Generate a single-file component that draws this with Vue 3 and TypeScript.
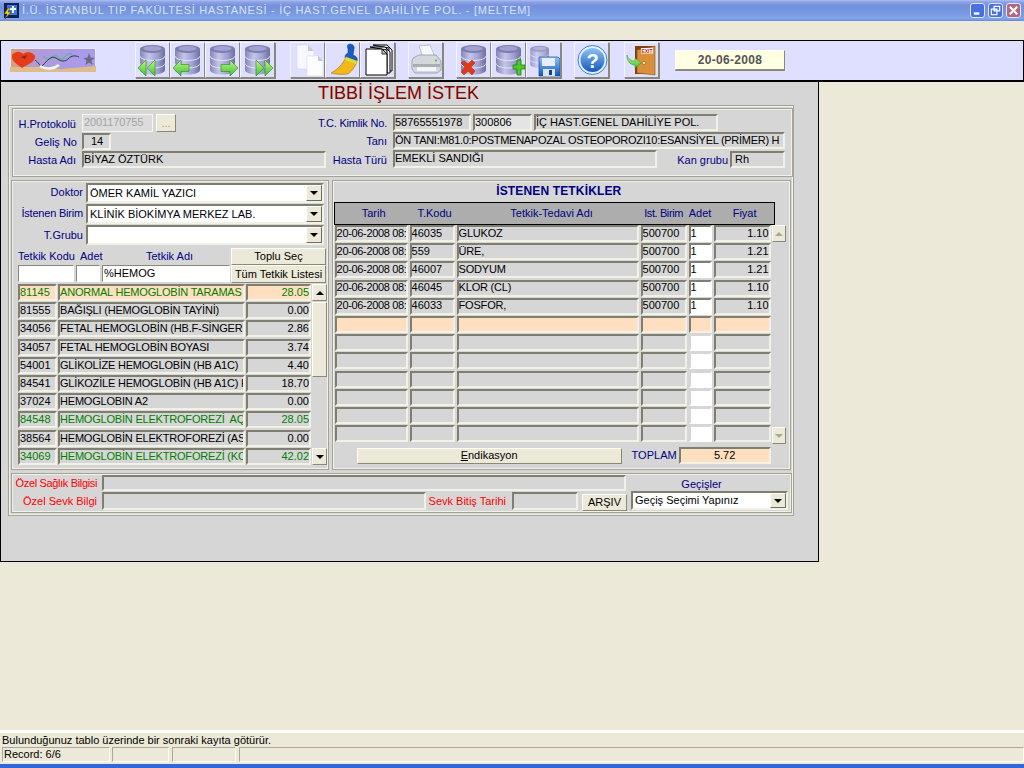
<script setup lang="ts">
interface ToolBtn { icon: string; gap: number }
const tools: ToolBtn[] = [
  { icon: 'first', gap: 39 }, { icon: 'prev', gap: 0 }, { icon: 'next', gap: 0 }, { icon: 'last', gap: 0 },
  { icon: 'new', gap: 15 }, { icon: 'broom', gap: 0 }, { icon: 'pages', gap: 0 },
  { icon: 'print', gap: 13 },
  { icon: 'dbdel', gap: 13 }, { icon: 'dbadd', gap: 0 }, { icon: 'dbsave', gap: 0 },
  { icon: 'help', gap: 13 }, { icon: 'exit', gap: 15 }
]
const dbIcons = ['first', 'prev', 'next', 'last', 'dbdel', 'dbadd']

interface Item { code: string; name: string; price: string; tone?: string }
const items: Item[] = [
  { code: '81145', name: 'ANORMAL HEMOGLOBİN TARAMAS', price: '28.05', tone: 'green sel' },
  { code: '81555', name: 'BAĞIŞLI (HEMOGLOBİN TAYİNİ)', price: '0.00' },
  { code: '34056', name: 'FETAL HEMOGLOBİN (HB.F-SİNGER', price: '2.86' },
  { code: '34057', name: 'FETAL HEMOGLOBİN BOYASI', price: '3.74' },
  { code: '54001', name: 'GLİKOLİZE HEMOGLOBİN (HB A1C)', price: '4.40' },
  { code: '84541', name: 'GLİKOZİLE HEMOGLOBİN (HB A1C) H', price: '18.70' },
  { code: '37024', name: 'HEMOGLOBIN A2', price: '0.00' },
  { code: '84548', name: 'HEMOGLOBİN ELEKTROFOREZİ  AQ', price: '28.05', tone: 'green' },
  { code: '38564', name: 'HEMOGLOBİN ELEKTROFOREZİ (AS', price: '0.00' },
  { code: '34069', name: 'HEMOGLOBİN ELEKTROFOREZİ (KO', price: '42.02', tone: 'green' }
]

interface Req { date: string; code: string; name: string; unit: string; qty: string; price: string; tone?: string }
const filled: Req[] = [
  { date: '20-06-2008 08:', code: '46035', name: 'GLUKOZ', unit: '500700', qty: '1', price: '1.10' },
  { date: '20-06-2008 08:', code: '559', name: 'ÜRE,', unit: '500700', qty: '1', price: '1.21' },
  { date: '20-06-2008 08:', code: '46007', name: 'SODYUM', unit: '500700', qty: '1', price: '1.21' },
  { date: '20-06-2008 08:', code: '46045', name: 'KLOR (CL)', unit: '500700', qty: '1', price: '1.10' },
  { date: '20-06-2008 08:', code: '46033', name: 'FOSFOR,', unit: '500700', qty: '1', price: '1.10' }
]
const blank = (tone?: string): Req => ({ date: '', code: '', name: '', unit: '', qty: '', price: '', tone })
const reqs: Req[] = [...filled, blank('sel'), ...Array.from({ length: 6 }, () => blank())]
</script>

<template>
  <div class="app">
    <svg class="defs" width="0" height="0" aria-hidden="true">
      <defs>
        <linearGradient id="dbg" x1="0" y1="0" x2="1" y2="0">
          <stop offset="0" stop-color="#8585b5" />
          <stop offset=".35" stop-color="#c5c5ea" />
          <stop offset=".7" stop-color="#a0a0d2" />
          <stop offset="1" stop-color="#6e6e9a" />
        </linearGradient>
        <linearGradient id="grn" x1="0" y1="0" x2="0" y2="1">
          <stop offset="0" stop-color="#c4f68c" />
          <stop offset="1" stop-color="#3cc030" />
        </linearGradient>
        <linearGradient id="blu" x1="0" y1="0" x2="0" y2="1">
          <stop offset="0" stop-color="#8cc4f4" />
          <stop offset="1" stop-color="#1458c0" />
        </linearGradient>
        <linearGradient id="lg" x1="0" y1="0" x2="1" y2="0">
          <stop offset="0" stop-color="#d8a070" />
          <stop offset=".3" stop-color="#b09ad8" />
          <stop offset="1" stop-color="#a89af0" />
        </linearGradient>
        <symbol id="db" viewBox="0 0 32 34">
          <path d="M3 6v21c0 2.500 5.500 4.500 12.500 4.500S28 29.500 28 27V6z" fill="url(#dbg)" />
          <ellipse cx="15.500" cy="6" rx="12.500" ry="4" fill="#7d7dae" />
          <ellipse cx="15.500" cy="5.500" rx="9" ry="2.500" fill="#a2a2d2" />
          <path d="M3 13c0 2.500 5.500 4.500 12.500 4.500S28 15.500 28 13M3 20.500c0 2.500 5.500 4.500 12.500 4.500S28 23 28 20.500" fill="none" stroke="#e6e6f8" stroke-width="1" />
        </symbol>
      </defs>
    </svg>

    <header class="titlebar">
      <svg class="appicon" viewBox="0 0 16 16" width="16" height="16">
        <rect x="1" y="0" width="15" height="15" fill="#102050" />
        <rect x="4" y="2" width="10" height="10" fill="#3a78d8" />
        <path d="M9 3l2 0 0 7-2 0zM6 5h7v2H6z" fill="#f0f4ff" />
        <path d="M5 5L1 11h3l-2 5 6-7H5l2-4z" fill="#f6d020" stroke="#302000" stroke-width=".5" />
      </svg>
      <span class="wintitle">İ.Ü. İSTANBUL TIP FAKÜLTESİ HASTANESİ - İÇ HAST.GENEL DAHİLİYE POL. - [MELTEM]</span>
      <div class="winbtns">
        <span class="wb"><svg viewBox="0 0 14 14" width="13" height="13"><rect x="3" y="9" width="6" height="2.500" fill="#fff" /></svg></span>
        <span class="wb"><svg viewBox="0 0 14 14" width="13" height="13"><path d="M5.500 2.500h6v5h-6zM2.500 5.500h6v6h-6z" fill="none" stroke="#fff" stroke-width="1.300" /></svg></span>
        <span class="wb close"><svg viewBox="0 0 14 14" width="13" height="13"><path d="M3 3l8 8M11 3l-8 8" stroke="#fff" stroke-width="2.200" /></svg></span>
      </div>
    </header>
    <div class="menuband"></div>

    <nav class="toolbar">
      <svg class="logo" viewBox="0 0 86 24" width="86" height="24">
        <rect width="86" height="24" fill="url(#lg)" />
        <rect x=".5" y=".5" width="85" height="23" fill="none" stroke="#eee8f0" />
        <path d="M0 19h30l22 2 34-3v6H0z" fill="#e0bc88" />
        <path d="M2 7c4-5 9-3 11-1 4-3 10-2 12 2 1 6-9 9-13 12C8 17 1 13 2 7z" fill="#e63a18" />
        <path d="M11 9l6-2-2 4z" fill="#7a3010" />
        <path d="M33 8c3 1 4 5 7 3 3-2 4-6 7-3 2 3 4 5 7 2 3-3 4-5 8-4" fill="none" stroke="#58b8a0" stroke-width="1.300" />
        <path d="M25 12c6 4 4 8 8 5 4-4 8-10 13-7 4 3 9 5 13 0 2-2 6-3 10-1" fill="none" stroke="#303a40" stroke-width="1" />
        <path d="M30 18c6 4 14 3 19-1" fill="none" stroke="#e8fbff" stroke-width="2.500" />
        <path d="M79 5l1.500 4.500 4 .5-3 2.500 1 4.500-3.500-2.500-3.500 2.500 1-4.500-3-2.500 4-.5z" fill="#6a6a80" />
      </svg>
      <button v-for="t in tools" :key="t.icon" type="button" class="tool" :style="{ marginLeft: t.gap + 'px' }">
        <svg viewBox="0 0 32 34" width="32" height="34">
          <use v-if="dbIcons.includes(t.icon)" href="#db" width="32" height="34" />
          <template v-if="t.icon === 'first'">
            <path d="M1 25l8-8v16zM10 25l8-8v16z" fill="url(#grn)" stroke="#2c8a20" stroke-width=".6" />
          </template>
          <template v-else-if="t.icon === 'prev'">
            <path d="M1 25l8-8v4.500h8v7H9V33z" fill="url(#grn)" stroke="#2c8a20" stroke-width=".6" />
          </template>
          <template v-else-if="t.icon === 'next'">
            <path d="M31 25l-8-8v4.500h-9v7h9V33z" fill="url(#grn)" stroke="#2c8a20" stroke-width=".6" />
          </template>
          <template v-else-if="t.icon === 'last'">
            <path d="M14 17l8 8-8 8zM23 17l8 8-8 8z" fill="url(#grn)" stroke="#2c8a20" stroke-width=".6" />
          </template>
          <template v-else-if="t.icon === 'new'">
            <path d="M5 2h11l6 6v18H5z" fill="#f7f7ff" stroke="#d8d8ea" stroke-width=".6" />
            <path d="M16 2v6h6z" fill="#c8c8d8" />
            <path d="M15 13h11l5 5v15H15z" fill="#fdfdff" stroke="#d8d8ea" stroke-width=".6" />
            <path d="M26 13v5h5z" fill="#c8c8d8" />
          </template>
          <template v-else-if="t.icon === 'broom'">
            <path d="M23 1c3 0 5 3 4 5l-1 6c3 1 5 3 4 6L18 15c0-3 1-4 3-5l0-4c-1-2-1-5 2-5z" fill="#1a5cc4" stroke="#0a3a90" stroke-width=".5" />
            <path d="M19 14l11 4c-1 5-7 13-10 13-5 1-13 0-16-1 6-3 12-9 15-16z" fill="#f0b818" stroke="#a07808" stroke-width=".6" />
            <path d="M19 14l11 4-1 3-11-4z" fill="#d8e040" />
          </template>
          <template v-else-if="t.icon === 'pages'">
            <path d="M11 2h14l5 5v21h-3V5z" fill="#fff" stroke="#000" stroke-width="1" />
            <path d="M8 4h15l5 5v21h-3V7z" fill="#fff" stroke="#000" stroke-width="1" />
            <path d="M4 6h16l5 5v21H4z" fill="#fff" stroke="#000" stroke-width="1" />
            <path d="M20 6v5h5z" fill="#c8c8c8" stroke="#000" stroke-width=".8" />
          </template>
          <template v-else-if="t.icon === 'print'">
            <path d="M9 3l11-1 5 12H13z" fill="#f6f8fa" stroke="#a8b0b8" stroke-width=".7" />
            <path d="M3 15l6-3h17l5 6v9l-4 3H5l-3-4v-8z" fill="#d4d8dc" stroke="#8a9096" stroke-width=".7" />
            <path d="M3 21h27v3H3z" fill="#a8aeb4" />
            <path d="M7 24h19v4H7z" fill="#f4f6f8" />
            <circle cx="26" cy="17.500" r="1" fill="#48b048" />
          </template>
          <template v-else-if="t.icon === 'dbdel'">
            <path d="M3 20l3-2 4 3 4-4 3 3-4 4 4 4-3 4-4-4-4 4-3-3 4-5z" fill="#e03a18" stroke="#a82008" stroke-width=".5" />
          </template>
          <template v-else-if="t.icon === 'dbadd'">
            <path d="M20 22h4v-5h4v5h4v4h-4v6h-4v-6h-4z" fill="#4cc828" stroke="#1c8010" stroke-width=".8" />
          </template>
          <template v-else-if="t.icon === 'dbsave'">
            <use href="#db" width="24" height="28" opacity=".75" />
            <path d="M11 14h19l2 2v17H11z" fill="url(#blu)" stroke="#0c3c90" stroke-width=".6" />
            <rect x="14" y="15" width="13" height="8" fill="#e8eef6" />
            <rect x="15" y="26" width="12" height="7" fill="#dce4f0" />
            <rect x="21" y="27" width="3" height="5" fill="#14408c" />
          </template>
          <template v-else-if="t.icon === 'help'">
            <circle cx="16.500" cy="17" r="14.500" fill="#e8f2ff" stroke="#3a80e0" stroke-width="1" />
            <circle cx="16.500" cy="17" r="12" fill="url(#blu)" />
            <text x="16.500" y="25" text-anchor="middle" class="qmark">?</text>
          </template>
          <template v-else-if="t.icon === 'exit'">
            <path d="M9 3h20v28H9z" fill="#7a4010" />
            <path d="M11 7l18-4v29l-18-2z" fill="#d8903a" stroke="#8a5418" stroke-width=".6" />
            <rect x="15" y="5" width="12" height="5.500" fill="#fff" />
            <text x="21" y="9.800" text-anchor="middle" class="exittxt">EXIT</text>
            <circle cx="18" cy="20" r="1.700" fill="#f4dca0" stroke="#804808" stroke-width=".5" />
            <path d="M1 12c1 4 4 6 8 6v-3l6 5-6 5v-3c-5 0-8-4-8-10z" fill="url(#grn)" stroke="#2c8a20" stroke-width=".5" />
          </template>
        </svg>
      </button>
      <div class="date">20-06-2008</div>
    </nav>

    <main class="form">
      <h1 class="formtitle">TIBBİ İŞLEM İSTEK</h1>
      <div class="group outer">
        <section class="group top">
          <div class="col tl">
            <div class="row h18">
              <label class="lab w63">H.Protokolü</label>
              <div class="field disabled w70">2001170755</div>
              <button type="button" class="btn dots">...</button>
            </div>
            <div class="row h17 mt1">
              <label class="lab w64">Geliş No</label>
              <div class="field w29 pl">14</div>
            </div>
            <div class="row h17 mt1">
              <label class="lab w63">Hasta Adı</label>
              <div class="field w244">BİYAZ ÖZTÜRK</div>
            </div>
          </div>
          <div class="col tr">
            <div class="row h17">
              <label class="lab w57 tight">T.C. Kimlik No.</label>
              <div class="field w78 ml6">58765551978</div>
              <div class="field w59 ml2 lighter">300806</div>
              <div class="field w184 ml2">İÇ HAST.GENEL DAHİLİYE POL.</div>
            </div>
            <div class="row h17 mt1">
              <label class="lab w57">Tanı</label>
              <div class="field w392 ml6 tani">ÖN TANI:M81.0:POSTMENAPOZAL OSTEOPOROZI10:ESANSİYEL (PRİMER) H</div>
            </div>
            <div class="row h18 mt1">
              <label class="lab w57">Hasta Türü</label>
              <div class="field w264 ml6">EMEKLİ SANDIĞI</div>
              <label class="lab w71">Kan grubu</label>
              <div class="field w55 ml2 kan">Rh</div>
            </div>
          </div>
        </section>

        <div class="mid">
          <section class="group left">
            <div class="row h20 ">
              <label class="lab w71 up1">Doktor</label>
              <div class="combo"><span class="ctext">ÖMER KAMİL YAZICI</span><span class="arrow"><i></i></span></div>
            </div>
            <div class="row h20 mt1">
              <label class="lab w71 up1 tight">İstenen Birim</label>
              <div class="combo"><span class="ctext">KLİNİK BİOKİMYA MERKEZ LAB.</span><span class="arrow"><i></i></span></div>
            </div>
            <div class="row h20 mt1">
              <label class="lab w71">T.Grubu</label>
              <div class="combo"><span class="ctext"></span><span class="arrow"><i></i></span></div>
            </div>
            <div class="search">
              <div class="sgrid">
                <span class="slab">Tetkik Kodu</span>
                <span class="slab adet">Adet</span>
                <span class="slab mid-l">Tetkik Adı</span>
                <div class="input"></div>
                <div class="input"></div>
                <div class="input">%HEMOG</div>
              </div>
              <div class="sbtns">
                <button type="button" class="btn b17">Toplu Seç</button>
                <button type="button" class="btn b18">Tüm Tetkik Listesi</button>
              </div>
            </div>
            <div class="listwrap">
              <div class="list">
                <template v-for="it in items" :key="it.code">
                  <div class="field cell" :class="it.tone">{{ it.code }}</div>
                  <div class="field cell nm" :class="it.tone">{{ it.name }}</div>
                  <div class="field cell num" :class="it.tone">{{ it.price }}</div>
                </template>
              </div>
              <div class="vscroll lscroll">
                <span class="sb"><i class="up"></i></span>
                <span class="thumb"></span>
                <span class="track"></span>
                <span class="sb"><i class="down"></i></span>
              </div>
            </div>
          </section>

          <section class="group right">
            <h2 class="rtitle">İSTENEN TETKİKLER</h2>
            <div class="thead">
              <span>Tarih</span><span>T.Kodu</span><span>Tetkik-Tedavi Adı</span><span>Ist. Birim</span><span>Adet</span><span>Fiyat</span>
            </div>
            <div class="tablewrap">
              <div class="table">
                <template v-for="(r, i) in reqs" :key="i">
                  <div class="field cell dt" :class="r.tone">{{ r.date }}</div>
                  <div class="field cell" :class="r.tone">{{ r.code }}</div>
                  <div class="field cell nm" :class="r.tone">{{ r.name }}</div>
                  <div class="field cell" :class="r.tone">{{ r.unit }}</div>
                  <div class="field cell qty" :class="r.tone">{{ r.qty }}</div>
                  <div class="field cell num" :class="r.tone">{{ r.price }}</div>
                </template>
              </div>
              <div class="vscroll rscroll">
                <span class="sb"><i class="up off"></i></span>
                <span class="track"></span>
                <span class="sb"><i class="down off"></i></span>
              </div>
            </div>
            <div class="totals">
              <button type="button" class="btn endik"><span><u>E</u>ndikasyon</span></button>
              <span class="toplam">TOPLAM</span>
              <div class="field sel total">5.72</div>
            </div>
          </section>
        </div>

        <section class="group bottom">
          <div class="bl">
            <div class="row h16 ">
              <label class="lab w85 red tighter">Özel Sağlık Bilgisi</label>
              <div class="field w524 ml5"></div>
            </div>
            <div class="row h18 mt1">
              <label class="lab w85 red">Özel Sevk Bilgi</label>
              <div class="field w324 ml5"></div>
              <label class="lab w80 red">Sevk Bitiş Tarihi</label>
              <div class="field w66 ml6"></div>
              <button type="button" class="btn arsiv">ARŞIV</button>
            </div>
          </div>
          <div class="br">
            <span class="gec">Geçişler</span>
            <div class="combo small"><span class="ctext">Geçiş Seçimi Yapınız</span><span class="arrow"><i></i></span></div>
          </div>
        </section>
      </div>
    </main>

    <div class="spacer"></div>
    <footer class="status">
      <div class="msg">Bulunduğunuz tablo üzerinde bir sonraki kayıta götürür.</div>
      <div class="panels">
        <span class="pn p1">Record: 6/6</span>
        <span class="pn p2"></span>
        <span class="pn p3"></span>
        <span class="pn p4"></span>
      </div>
    </footer>
  </div>
</template>

<style scoped>
* { box-sizing: border-box; }
.app {
  position: relative; width: 1024px; height: 768px; overflow: hidden;
  display: flex; flex-direction: column; background: #ece9d8;
  font: 11px/13px "Liberation Sans", Arial, sans-serif; color: #000;
}
.defs { position: absolute; }
.titlebar {
  height: 21px; display: flex; align-items: center; padding: 0 3px;
  background: linear-gradient(#aebfee 0, #8ba2e6 2px, #7490dc 6px, #7a9ae2 14px, #7ea6ea 19px, #6c80d8 21px);
}
.appicon { flex: none; }
.wintitle { margin-left: 3px; font-size: 11px; letter-spacing: .72px; color: #d8e2f6; white-space: nowrap; }
.winbtns { margin-left: auto; display: flex; gap: 3px; }
.wb { width: 15px; height: 15px; border: 1px solid #dfe6f8; border-radius: 3px; background: #4a70e0; display: flex; }
.wb svg { display: block; }
.wb.close { background: #b0687e; }
.menuband { height: 19px; }
.toolbar {
  height: 42px; display: flex; align-items: center; padding: 0 0 1px 9px;
  background: #dfdfff; border: solid #000; border-width: 1px 1px 2px;
}
.logo { flex: none; }
.tool {
  flex: none; width: 35px; height: 36px; padding: 0; margin: 0;
  display: flex; align-items: center; justify-content: center;
  background: #dfdfff; border: 1px solid; border-color: #f4f4ff #8a8878 #8a8878 #f4f4ff;
  box-shadow: 1px 1px 0 #8a8878;
}
.tool svg { display: block; }
.qmark { font: bold 20px "Liberation Sans", sans-serif; fill: #fff; }
.exittxt { font: bold 5px "Liberation Sans", sans-serif; fill: #d01010; }
.date {
  margin-left: 16px; width: 110px; height: 20px; display: flex; align-items: center; justify-content: center;
  background: #ffffe1; border: 1px solid; border-color: #fff #8a8878 #8a8878 #fff; box-shadow: 0 1px 0 #8a8878;
  font-weight: bold; font-size: 12px; letter-spacing: .3px; color: #555;
}
.form {
  width: 819px; height: 480px; background: #d6d6d6;
  border: solid #000; border-width: 0 1px 1px 1px;
}
.formtitle {
  margin: 0; height: 23px; padding: 2px 22px 0 0; text-align: center;
  font: 18px/19px "Liberation Sans", Arial, sans-serif; color: #800000;
}
.group { border: 1px solid #a4a396; box-shadow: inset 0 0 0 1px #f2f1e8; }
.outer {
  margin-left: 7px; width: 786px; height: 411px; padding: 2px;
  display: flex; flex-direction: column; gap: 3px;
}
.top { margin-left: 1px; width: 781px; height: 69px; display: flex; padding-top: 5px; flex: none; }
.top .lab { padding-top: 2px; }
.col { display: flex; flex-direction: column; }
.tl { width: 317px; }
.row { display: flex; align-items: center; }
.h16 { height: 16px; } .h17 { height: 17px; } .h18 { height: 18px; } .h20 { height: 20px; }
.mt1 { margin-top: 1px; }
.lab { display: flex; justify-content: flex-end; white-space: nowrap; color: #000080; flex: none; }
.tight { letter-spacing: -.2px; }
.tighter { letter-spacing: -.35px; }
.up1 { padding-bottom: 2px; }
.red { color: #f00; }
.w57 { width: 57px; } .w63 { width: 63px; margin-right: 6px; } .w64 { width: 64px; margin-right: 5px; }
.w71 { width: 71px; } .w85 { width: 85px; } .w80 { width: 80px; }
.field {
  flex: none; height: 100%; overflow: hidden; white-space: pre;
  padding: 0 0 1px 0; display: flex; align-items: center;
  background: #d6d6d6; border: 2px solid; border-color: #7f7e70 #f2f1e6 #f2f1e6 #7f7e70;
}
.w70 { width: 71px; } .w29 { width: 29px; } .w244 { width: 244px; } .w78 { width: 78px; } .w59 { width: 59px; }
.w184 { width: 184px; } .w392 { width: 392px; } .w264 { width: 264px; } .w55 { width: 55px; }
.w524 { width: 524px; } .w324 { width: 324px; } .w66 { width: 66px; }
.ml2 { margin-left: 2px; } .ml5 { margin-left: 5px; } .ml6 { margin-left: 6px; }
.pl { padding-left: 7px; }
.tani { letter-spacing: -.28px; }
.lighter { background: #e4e4e4; }
.kan { margin-left: 2px; height: 17px; align-self: flex-end; padding-left: 3px; }
.disabled {
  background: #dcdcdc; color: #a4a4a4; border-width: 1px; border-color: #f6f5ee;
  padding-left: 1px; letter-spacing: -.1px;
}
.btn {
  flex: none; padding: 0; font: inherit; color: #000; background: #ece9d8;
  border: 1px solid; border-color: #fffef8 #8a8878 #8a8878 #fffef8;
  display: flex; align-items: center; justify-content: center; white-space: nowrap;
}
.dots { margin-left: 3px; width: 20px; height: 18px; color: #a0a090; }
.mid { display: flex; gap: 3px; flex: none; height: 290px; }
.left { width: 318px; height: 290px; padding: 2px 0 0 0; }
.combo {
  flex: none; margin-left: 3px; width: 238px; height: 100%; display: flex; align-items: center;
  background: #fff; border: 2px solid; border-color: #7f7e70 #f2f1e6 #f2f1e6 #7f7e70;
}
.ctext { flex: 1; padding-left: 2px; white-space: nowrap; overflow: hidden; }
.arrow {
  flex: none; width: 16px; height: 100%; display: flex; align-items: center; justify-content: center;
  background: #ece9d8; border: 1px solid; border-color: #fff #6f6e60 #6f6e60 #fff;
}
.arrow i { width: 0; height: 0; border: 4px solid transparent; border-top-color: #000; border-bottom-width: 0; }
.search { margin: 3px 0 0 6px; display: flex; height: 35px; }
.sgrid {
  width: 213px; display: grid; grid-template-columns: 56px 24px 128px; column-gap: 2px;
  grid-template-rows: 17px 17px;
}
.slab { color: #000080; white-space: nowrap; align-self: end; padding-bottom: 2px; }
.adet { padding-left: 4px; }
.mid-l { padding-left: 44px; }
.input {
  background: #fff; border: 1px solid; border-color: #8a8878 #fff #fff #8a8878;
  padding: 1px 1px 0 1px; white-space: nowrap;
}
.sbtns { width: 95px; display: flex; flex-direction: column; }
.b17 { height: 17px; } .b18 { height: 18px; }
.listwrap { margin: 1px 0 0 6px; display: flex; }
.list {
  display: grid; grid-template-columns: 39px 187px 65px; column-gap: 1px;
  grid-auto-rows: 17px; row-gap: 1.2px;
}
.cell { height: 17px; padding: 0 0 1px 0; }
.list .cell { padding-bottom: 0; }
.nm { letter-spacing: -.2px; }
.dt { letter-spacing: -.33px; }
.num { justify-content: flex-end; }
.green { color: #008000; }
.sel { background: #ffdfc0; }
.vscroll { display: flex; flex-direction: column; background: #d6d6d6; flex: none; }
.lscroll { margin-left: 1px; width: 15px; height: 181px; }
.rscroll { margin-left: 1px; width: 14px; height: 219px; }
.sb {
  flex: none; height: 17px; display: flex; align-items: center; justify-content: center;
  background: #ece9d8; border: 1px solid; border-color: #fff #8a8878 #8a8878 #fff;
}
.sb i { width: 0; height: 0; border: 4px solid transparent; }
.up { border-top-width: 0 !important; border-bottom-color: #000 !important; }
.down { border-bottom-width: 0 !important; border-top-color: #000 !important; }
.up.off { border-bottom-color: #a8a898 !important; }
.down.off { border-top-color: #a8a898 !important; }
.thumb { flex: none; height: 75px; margin-top: 1px; background: #ece9d8; border: 1px solid; border-color: #fff #8a8878 #8a8878 #fff; }
.track { flex: 1; }
.right { width: 460px; height: 290px; }
.rtitle {
  margin: 0; height: 21px; padding: 3px 5px 0 0; text-align: center;
  font: bold 12px/14px "Liberation Sans", Arial, sans-serif; letter-spacing: .15px; color: #000080;
}
.thead {
  margin-left: 1px; width: 441px; height: 23px; border: 1px solid #000; background: #adadad; color: #000080;
  display: grid; grid-template-columns: 73px 45px 182px 46px 23px 57px; column-gap: 2px; align-items: center;
  white-space: nowrap;
}
.thead span { display: flex; justify-content: center; }
.thead span:nth-child(1) { padding-left: 5px; }
.thead span:nth-child(2) { padding-left: 5px; }
.thead span:nth-child(3) { padding-left: 8px; }
.thead span:nth-child(4) { letter-spacing: -.4px; }
.thead span:nth-child(6) { padding-left: 5px; }
.tablewrap { margin-left: 2px; display: flex; }
.table {
  display: grid; grid-template-columns: 73px 45px 182px 46px 23px 57px; column-gap: 2px;
  grid-auto-rows: 17px; row-gap: 1.2px;
}
.qty { background: #fff; border-color: #7f7e70 #fff #fff #7f7e70; }
.qty:empty { border-color: #d6d6d6 #fff #fff #d6d6d6; }
.qty.sel { background: #ffdfc0; border-color: #7f7e70 #f2f1e6 #f2f1e6 #7f7e70; }
.totals { margin-top: 3px; display: flex; align-items: center; height: 17px; }
.endik { margin-left: 24px; width: 265px; height: 16px; }
.toplam { margin-left: 10px; width: 47px; color: #000080; }
.total { width: 92px; justify-content: center; height: 17px; }
.bottom { width: 781px; height: 40px; display: flex; flex: none; }
.bl { width: 619px; padding-top: 1px; }
.arsiv { margin: 3px 0 0 4px; width: 45px; height: 17px; }
.br { display: flex; flex-direction: column; align-items: center; width: 157px; }
.gec { margin-top: 4px; height: 13px; color: #000080; padding-right: 16px; }
.small { margin: 0; width: 157px; height: 19px; flex: none; }
.spacer { flex: 1; }
.status { height: 38px; border-top: 3px solid #fff; display: flex; flex-direction: column; border-bottom: 4px solid #3168d5; }
.msg { height: 14px; padding-left: 2px; line-height: 14px; }
.panels { height: 15px; display: flex; padding-left: 2px; }
.pn { display: block; height: 15px; padding-left: 1px; border: 1px solid; border-color: #a9a899 #fff #fff #a9a899; }
.p1 { width: 108px; } .p2 { margin-left: 2px; width: 57px; } .p3 { margin-left: 3px; width: 64px; } .p4 { margin-left: 3px; flex: 1; }
</style>
